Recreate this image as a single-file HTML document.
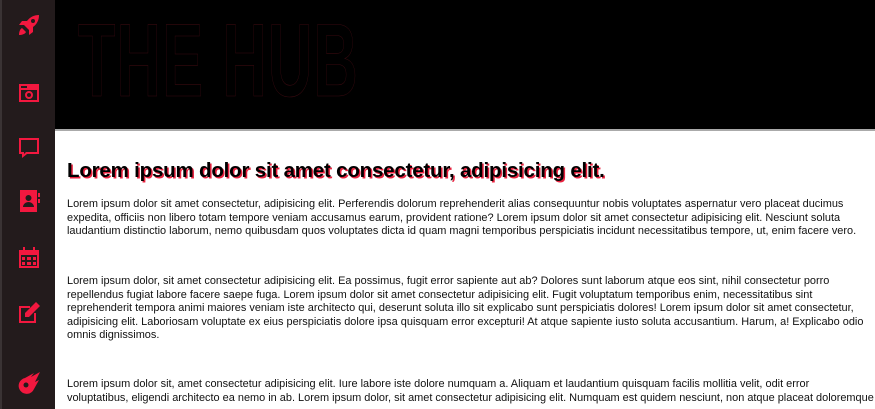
<!DOCTYPE html>
<html><head><meta charset="utf-8"><style>
*{margin:0;padding:0;box-sizing:border-box}
html,body{width:875px;height:409px;overflow:hidden;background:#fff;font-family:"Liberation Sans",sans-serif}
.side{position:absolute;left:0;top:0;width:55px;height:409px;background:#231b1c;border-left:2px solid #3a3334}
.side svg{position:absolute;left:15px;width:24px;height:24px;fill:#f2183f}
.hdr{position:absolute;left:55px;top:0;width:820px;height:131px;background:#000;border-bottom:2px solid #aaa}
.hub{position:absolute;left:78px;top:4px;font-size:104px;font-weight:bold;color:#000;-webkit-text-stroke:0.6px #3a0a10;transform:scaleX(0.59);transform-origin:left top;letter-spacing:2px;line-height:115px}
h1{position:absolute;left:67px;top:159px;font-size:20.5px;font-weight:bold;color:#000;text-shadow:1.5px 1.5px 0 #e8223f;white-space:nowrap;letter-spacing:-0.2px}
.p{position:absolute;left:67px;font-size:10.95px;line-height:13.6px;color:#111;white-space:nowrap}
</style></head><body>
<div class="side">
<svg style="top:13px" viewBox="0 0 24 24"><path d="M22 2c-5 0-9 2-12 6H5l-3 4h5l5 5v5l4-3v-5c4-3 6-7 6-12zM16 6a2 2 0 1 1 0 4a2 2 0 0 1 0-4zM5 15c-2 1-3 4-3 7c3 0 6-1 7-3z"/></svg>
<svg style="top:81px" viewBox="0 0 24 24"><path d="M2 3h20v18H2zM4 5v2h6V5zM4 9v10h16V9zM12 10a4 4 0 1 1 0 8a4 4 0 0 1 0-8zm0 2a2 2 0 1 0 0 4a2 2 0 0 0 0-4z" fill-rule="evenodd"/></svg>
<svg style="top:136px" viewBox="0 0 24 24"><path d="M2 2h20v16H10l-5 4v-4H2zM4 4v12h3v2l2-2h11V4z" fill-rule="evenodd"/></svg>
<svg style="top:189px" viewBox="0 0 24 24"><path d="M3 1h17v22H3zM11.5 6a3 3 0 1 1 0 6a3 3 0 0 1 0-6zM6 18c0-3 3-5 5.5-5s5.5 2 5.5 5z M21 4h2v4h-2zM21 10h2v4h-2z" fill-rule="evenodd"/></svg>
<svg style="top:246px" viewBox="0 0 24 24"><path d="M6 1h2v3h8V1h2v3h4v18H2V4h4zM4 9v11h16V9zM5 11h3v3H5zM10 11h4v3h-4zM16 11h3v3h-3zM5 16h3v3H5zM10 16h4v3h-4zM16 16h3v3h-3z" fill-rule="evenodd"/></svg>
<svg style="top:301px" viewBox="0 0 24 24"><path d="M2 5h11v2H4v13h13v-8h2v10H2zM19 1l4 4-11 11H8v-4z"/></svg>
<svg style="top:371px" viewBox="0 0 24 24"><path d="M23 1L14 6l3-4-9 5a8 8 0 1 0 9 11l5-9-4 2zM9 12a2 2 0 1 1 0 4a2 2 0 0 1 0-4z" fill-rule="evenodd"/><circle cx="9" cy="14" r="2.5" fill="#231b1c"/></svg>
</div>
<div class="hdr"></div>
<div class="hub">THE HUB</div>
<h1>Lorem ipsum dolor sit amet consectetur, adipisicing elit.</h1>
<div class="p" style="top:198px">Lorem ipsum dolor sit amet consectetur, adipisicing elit. Perferendis dolorum reprehenderit alias consequuntur nobis voluptates aspernatur vero placeat ducimus<br>expedita, officiis non libero totam tempore veniam accusamus earum, provident ratione? Lorem ipsum dolor sit amet consectetur adipisicing elit. Nesciunt soluta<br>laudantium distinctio laborum, nemo quibusdam quos voluptates dicta id quam magni temporibus perspiciatis incidunt necessitatibus tempore, ut, enim facere vero.</div>
<div class="p" style="top:275px">Lorem ipsum dolor, sit amet consectetur adipisicing elit. Ea possimus, fugit error sapiente aut ab? Dolores sunt laborum atque eos sint, nihil consectetur porro<br>repellendus fugiat labore facere saepe fuga. Lorem ipsum dolor sit amet consectetur adipisicing elit. Fugit voluptatum temporibus enim, necessitatibus sint<br>reprehenderit tempora animi maiores veniam iste architecto qui, deserunt soluta illo sit explicabo sunt perspiciatis dolores! Lorem ipsum dolor sit amet consectetur,<br>adipisicing elit. Laboriosam voluptate ex eius perspiciatis dolore ipsa quisquam error excepturi! At atque sapiente iusto soluta accusantium. Harum, a! Explicabo odio<br>omnis dignissimos.</div>
<div class="p" style="top:378px">Lorem ipsum dolor sit, amet consectetur adipisicing elit. Iure labore iste dolore numquam a. Aliquam et laudantium quisquam facilis mollitia velit, odit error<br>voluptatibus, eligendi architecto ea nemo in ab. Lorem ipsum dolor, sit amet consectetur adipisicing elit. Numquam est quidem nesciunt, non atque placeat doloremque</div>
</body></html>
